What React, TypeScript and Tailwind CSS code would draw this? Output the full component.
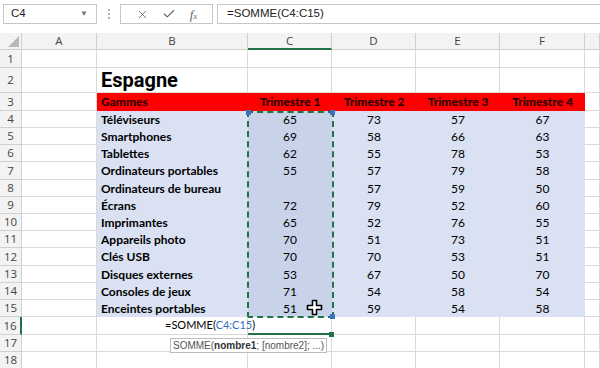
import React from 'react';
import { X, Check } from 'lucide-react';

type Line = { label: string; q1: string; q2: string; q3: string; q4: string; h: string };

const lignes: Line[] = [
  { label: 'Téléviseurs', q1: '65', q2: '73', q3: '57', q4: '67', h: 'h-[17px]' },
  { label: 'Smartphones', q1: '69', q2: '58', q3: '66', q4: '63', h: 'h-[17px]' },
  { label: 'Tablettes', q1: '62', q2: '55', q3: '78', q4: '53', h: 'h-[17px]' },
  { label: 'Ordinateurs portables', q1: '55', q2: '57', q3: '79', q4: '58', h: 'h-[18px]' },
  { label: 'Ordinateurs de bureau', q1: '', q2: '57', q3: '59', q4: '50', h: 'h-[17px]' },
  { label: 'Écrans', q1: '72', q2: '79', q3: '52', q4: '60', h: 'h-[17px]' },
  { label: 'Imprimantes', q1: '65', q2: '52', q3: '76', q4: '55', h: 'h-[17px]' },
  { label: 'Appareils photo', q1: '70', q2: '51', q3: '73', q4: '51', h: 'h-[17px]' },
  { label: 'Clés USB', q1: '70', q2: '70', q3: '53', q4: '51', h: 'h-[18px]' },
  { label: 'Disques externes', q1: '53', q2: '67', q3: '50', q4: '70', h: 'h-[17px]' },
  { label: 'Consoles de jeux', q1: '71', q2: '54', q3: '58', q4: '54', h: 'h-[17px]' },
  { label: 'Enceintes portables', q1: '51', q2: '59', q3: '54', q4: '58', h: 'h-[17px]' },
];

const grid = 'border-r border-b border-[#dadada]';
const hdr = 'flex items-center justify-center bg-[#f3f3f3] text-[#444] font-normal border-r border-b border-[#d0d0d0] text-[11.5px] font-["Open_Sans",sans-serif]';

function RowHead({ n, active }: { n: number; active?: boolean }) {
  return (
    <div
      className={`w-[22px] shrink-0 ${hdr} ${active ? 'bg-[#d2d2d2] border-r-2 border-r-[#217346]' : ''}`}
    >
      {n}
    </div>
  );
}

function EmptyRow({ n, h, active }: { n: number; h: string; active?: boolean }) {
  return (
    <div className={`flex ${h}`}>
      <RowHead n={n} active={active} />
      <div className={`w-[75px] ${grid}`} />
      <div className={`w-[151px] ${grid}`} />
      <div className={`w-[84px] ${grid}`} />
      <div className={`w-[84px] ${grid}`} />
      <div className={`w-[84px] ${grid}`} />
      <div className={`w-[85px] ${grid}`} />
      <div className={`flex-1 ${grid}`} />
    </div>
  );
}

function MoveCursor() {
  return (
    <svg width="17" height="17" viewBox="0 0 17 17">
      <path
        d="M6.5 1.5 h4 v5 h5 v4 h-5 v5 h-4 v-5 h-5 v-4 h5 z"
        fill="#fff"
        stroke="#000"
        strokeWidth="1.6"
        strokeLinejoin="round"
      />
    </svg>
  );
}

export default function App() {
  return (
    <div className="w-[600px] h-[368px] overflow-hidden bg-white font-['Lato',sans-serif] text-black">
      {/* barre de formule */}
      <div className="h-[33px] flex items-start pt-[4px] bg-white font-['Liberation_Sans',sans-serif] text-[11.5px] text-[#222]">
        <div className="ml-[3px] w-[94px] h-[20px] border border-[#c6c6c6] flex items-center justify-between pl-[7px] pr-[8px]">
          <span>C4</span>
          <span className="text-[8px] text-[#777]">▼</span>
        </div>
        <div className="w-[23px] h-[20px] flex flex-col items-center justify-center gap-[2px]">
          <span className="w-[2px] h-[2px] bg-[#b0b0b0]" />
          <span className="w-[2px] h-[2px] bg-[#b0b0b0]" />
          <span className="w-[2px] h-[2px] bg-[#b0b0b0]" />
        </div>
        <div className="w-[93px] h-[20px] border border-[#c6c6c6] flex items-center justify-around px-[8px] text-[#666]">
          <X size={13} strokeWidth={1.6} />
          <Check size={14} strokeWidth={2} />
          <span className="font-['Liberation_Serif',serif] italic text-[13px] leading-none">
            f<span className="text-[9px]">x</span>
          </span>
        </div>
        <div className="ml-[4px] flex-1 h-[20px] border border-[#c6c6c6] border-r-0 flex items-center pl-[9px]">
          =SOMME(C4:C15)
        </div>
      </div>

      <div className="relative">
        {/* en-têtes de colonnes */}
        <div className="flex h-[17px]">
          <div className={`w-[22px] ${hdr} relative`}>
            <svg className="absolute right-[2px] bottom-[2px]" width="11" height="11" viewBox="0 0 11 11">
              <polygon points="11,0 11,11 0,11" fill="#b9b9b9" />
            </svg>
          </div>
          <div className={`w-[75px] ${hdr}`}>A</div>
          <div className={`w-[151px] ${hdr}`}>B</div>
          <div className={`w-[84px] ${hdr} bg-[#d2d2d2] border-b-2 border-b-[#217346]`}>C</div>
          <div className={`w-[84px] ${hdr}`}>D</div>
          <div className={`w-[84px] ${hdr}`}>E</div>
          <div className={`w-[85px] ${hdr}`}>F</div>
          <div className={`flex-1 ${hdr}`} />
        </div>

        <EmptyRow n={1} h="h-[18px]" />

        <div className="flex h-[25px]">
          <RowHead n={2} />
          <div className={`w-[75px] ${grid}`} />
          <div className={`w-[151px] ${grid} flex items-end pl-[4px]`}>
            <span className="font-['Roboto',sans-serif] font-bold text-[20px] leading-[24px]">Espagne</span>
          </div>
          <div className={`w-[84px] ${grid}`} />
          <div className={`w-[84px] ${grid}`} />
          <div className={`w-[84px] ${grid}`} />
          <div className={`w-[85px] ${grid}`} />
          <div className={`flex-1 ${grid}`} />
        </div>

        <div className="flex h-[18px] text-[12px]">
          <RowHead n={3} />
          <div className={`w-[75px] ${grid}`} />
          <div className="w-[151px] bg-[#ff0000] flex items-center pl-[4px] font-black text-[#2a0000]">Gammes</div>
          <div className="w-[84px] bg-[#ff0000] flex items-center justify-center font-black text-[#2a0000]">Trimestre 1</div>
          <div className="w-[84px] bg-[#ff0000] flex items-center justify-center font-black text-[#2a0000]">Trimestre 2</div>
          <div className="w-[84px] bg-[#ff0000] flex items-center justify-center font-black text-[#2a0000]">Trimestre 3</div>
          <div className="w-[85px] bg-[#ff0000] flex items-center justify-center font-black text-[#2a0000]">Trimestre 4</div>
          <div className={`flex-1 ${grid}`} />
        </div>

        {lignes.map((l, i) => (
          <div key={l.label} className={`flex ${l.h} text-[12px]`}>
            <RowHead n={i + 4} />
            <div className={`w-[75px] ${grid}`} />
            <div className="w-[151px] bg-[#d9e1f2] flex items-center pl-[4px] font-bold whitespace-nowrap">
              {l.label}
            </div>
            <div className="w-[84px] bg-[#c8d3ea] flex items-center justify-center">{l.q1}</div>
            <div className="w-[84px] bg-[#d9e1f2] flex items-center justify-center">{l.q2}</div>
            <div className="w-[84px] bg-[#d9e1f2] flex items-center justify-center">{l.q3}</div>
            <div className="w-[85px] bg-[#d9e1f2] flex items-center justify-center">{l.q4}</div>
            <div className={`flex-1 ${grid}`} />
          </div>
        ))}

        <div className="flex h-[18px] text-[11px]">
          <RowHead n={16} active />
          <div className={`w-[75px] ${grid}`} />
          <div className={`w-[151px] ${grid} flex items-center pl-[68px] whitespace-nowrap relative z-10`}>
            <span>
              =SOMME(<span className="text-[#2f6fbf]">C4:C15</span>)
            </span>
          </div>
          <div className="w-[84px] border-r border-[#dadada] border-b-2 border-b-[#217346] relative">
            <span className="absolute -right-[3px] -bottom-[4px] w-[5px] h-[5px] bg-[#217346]" />
          </div>
          <div className={`w-[84px] ${grid}`} />
          <div className={`w-[84px] ${grid}`} />
          <div className={`w-[85px] ${grid}`} />
          <div className={`flex-1 ${grid}`} />
        </div>

        <EmptyRow n={17} h="h-[17px]" />
        <EmptyRow n={18} h="h-[17px]" />

        {/* sélection en pointillés C4:C15 */}
        <div className="absolute left-[247px] top-[78px] w-[87px] h-[207px] border-2 border-dashed border-[#217346]">
          <span className="absolute -left-[3px] -top-[3px] w-[5px] h-[5px] bg-[#3b70c6]" />
          <span className="absolute -right-[3px] -top-[3px] w-[5px] h-[5px] bg-[#3b70c6]" />
          <span className="absolute -right-[3px] -bottom-[3px] w-[5px] h-[5px] bg-[#3b70c6]" />
          <div className="absolute left-[57px] top-[186px]">
            <MoveCursor />
          </div>
        </div>

        {/* info-bulle */}
        <div className="absolute left-[170px] top-[305px] h-[15px] px-[2px] bg-white border border-[#bdbdbd] flex items-center text-[10px] text-[#555] font-['Liberation_Sans',sans-serif] whitespace-nowrap">
          SOMME(<span className="font-bold text-[#333]">nombre1</span>; [nombre2]; ...)
        </div>
      </div>
    </div>
  );
}
